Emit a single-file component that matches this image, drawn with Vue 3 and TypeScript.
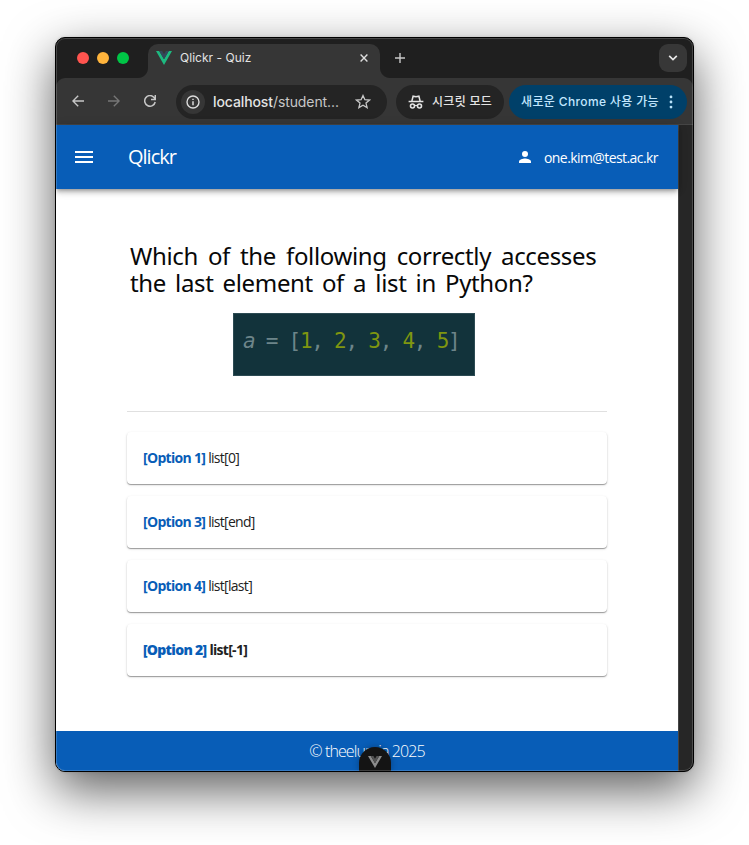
<script setup lang="ts">
interface QuizOption {
  id: number
  text: string
  selected: boolean
}

const options: QuizOption[] = [
  { id: 1, text: 'list[0]', selected: false },
  { id: 3, text: 'list[end]', selected: false },
  { id: 4, text: 'list[last]', selected: false },
  { id: 2, text: 'list[-1]', selected: true },
]

const values: number[] = [1, 2, 3, 4, 5]
</script>

<template>
  <main class="desktop">
    <section class="window">
      <header class="tabstrip">
        <div class="lights">
          <i class="light red"></i>
          <i class="light yellow"></i>
          <i class="light green"></i>
        </div>
        <div class="tab">
          <svg class="favicon" width="16" height="14" viewBox="0 0 16 14">
            <path d="M0 0H3.2L8 8.3 12.8 0H16L8 13.9Z" fill="#1eb980" />
            <path d="M3.2 0H6.1L8 3.2 9.9 0H12.8L8 8.3Z" fill="#33475b" />
          </svg>
          <span class="tab-title">Qlickr - Quiz</span>
          <svg class="close" width="8" height="8" viewBox="0 0 8 8">
            <path d="M.6.6 7.4 7.4M7.4.6.6 7.4" stroke="#dedede" stroke-width="1.4" />
          </svg>
        </div>
        <svg class="plus" width="10" height="10" viewBox="0 0 10 10">
          <path d="M5 0V10M0 5H10" stroke="#c9c9c9" stroke-width="1.4" />
        </svg>
        <div class="tab-search">
          <svg width="10" height="6" viewBox="0 0 10 6">
            <path d="M1.2.8 5 4.6 8.8.8" fill="none" stroke="#e6e6e6" stroke-width="1.7" />
          </svg>
        </div>
      </header>

      <nav class="toolbar">
        <svg class="nav-icon" width="12" height="12" viewBox="0 0 12 12">
          <path d="M12 6H1M6.2.7.9 6l5.3 5.3" fill="none" stroke="#c7c7c7" stroke-width="1.4" />
        </svg>
        <svg class="nav-icon" width="12" height="12" viewBox="0 0 12 12">
          <path d="M0 6H11M5.8.7 11.1 6l-5.3 5.3" fill="none" stroke="#777" stroke-width="1.4" />
        </svg>
        <svg class="nav-icon" width="12" height="12" viewBox="0 0 12 12">
          <path d="M11.2 7A5.3 5.3 0 1 1 10 2.4L11 3.6M11.3 0V4.4H7" fill="none" stroke="#c7c7c7" stroke-width="1.5" />
        </svg>
        <div class="address">
          <div class="info">
            <svg width="14" height="14" viewBox="0 0 14 14">
              <circle cx="7" cy="7" r="6" fill="none" stroke="#dcdcdc" stroke-width="1.4" />
              <path d="M7 6.2V10.2M7 3.7V5.1" stroke="#dcdcdc" stroke-width="1.5" />
            </svg>
          </div>
          <span class="url"><b>localhost</b>/student...</span>
          <svg class="star" width="16" height="15" viewBox="0 0 16 15">
            <path d="M8 1.5 9.9 5.7 14.5 6.1 11 9.1 12.1 13.6 8 11.2 3.9 13.6 5 9.1 1.5 6.1 6.1 5.7Z" fill="none" stroke="#c7c7c7" stroke-width="1.3" />
          </svg>
        </div>
        <div class="incognito">
          <svg width="16" height="14" viewBox="0 0 16 14" fill="none" stroke="#e3e3e3">
            <path d="M3.9 6 5.1 1.2 8 1.7 10.9 1.2 12.1 6M.6 6.6H15.4" stroke-width="1.5" />
            <circle cx="4.5" cy="11" r="2" stroke-width="1.6" />
            <circle cx="11.5" cy="11" r="2" stroke-width="1.6" />
            <path d="M6.6 10.8Q8 10 9.4 10.8" stroke-width="1.3" />
          </svg>
          <span>시크릿 모드</span>
        </div>
        <div class="update">
          <span>새로운 Chrome 사용 가능</span>
          <svg width="4" height="14" viewBox="0 0 4 14" fill="#b9e3fa">
            <circle cx="2" cy="1.9" r="1.4" />
            <circle cx="2" cy="7" r="1.4" />
            <circle cx="2" cy="12.1" r="1.4" />
          </svg>
        </div>
      </nav>

      <div class="viewport">
        <div class="page">
          <header class="appbar">
            <svg class="menu" width="18" height="12" viewBox="0 0 18 12">
              <path d="M0 0H18V2H0ZM0 5H18V7H0ZM0 10H18V12H0Z" fill="#fff" />
            </svg>
            <h1 class="brand">Qlickr</h1>
            <svg class="person" width="12" height="12" viewBox="0 0 12 12" fill="#fff">
              <circle cx="6" cy="3" r="3" />
              <path d="M0 12V10.5C0 8.5 4 7.5 6 7.5S12 8.5 12 10.5V12Z" />
            </svg>
            <span class="email">one.kim@test.ac.kr</span>
          </header>

          <section class="quiz">
            <div class="question">
              <p class="line first">Which of the following correctly accesses</p>
              <p class="line second">the last element of a list in Python?</p>
            </div>
            <div class="code"><em>a</em> = [<template v-for="(v, i) in values" :key="v"><span class="num">{{ v }}</span>{{ i < values.length - 1 ? ', ' : ']' }}</template></div>
            <hr class="divider" />
            <ul class="options">
              <li v-for="option in options" :key="option.id" class="option" :class="{ selected: option.selected }">
                <b class="label">[Option {{ option.id }}]</b>
                <span class="answer">{{ option.text }}</span>
              </li>
            </ul>
          </section>

          <footer class="footer">
            <span>© theelumia 2025</span>
            <div class="devtools">
              <svg width="14" height="12" viewBox="0 0 14 12">
                <path d="M0 0H2.8L7 7.2 11.2 0H14L7 12Z" fill="#8c8c8c" />
                <path d="M2.8 0H5.4L7 2.8 8.6 0H11.2L7 7.2Z" fill="#545454" />
              </svg>
            </div>
          </footer>
        </div>
        <aside class="gutter"></aside>
      </div>
    </section>
  </main>
</template>

<style>
body {
  background: #fff;
  overflow: hidden;
}
</style>

<style scoped>
* {
  box-sizing: border-box;
}

.desktop {
  width: 749px;
  height: 845px;
  padding: 37px 55px 0;
  overflow: hidden;
  background: #fff;
}

.window {
  position: relative;
  width: 639px;
  height: 735px;
  border: 1px solid #000;
  border-radius: 10px;
  overflow: hidden;
  background: #1f1f1f;
  box-shadow: 0 18px 50px rgba(0, 0, 0, 0.64), 0 0 3px rgba(0, 0, 0, 0.15);
  font-family: Inter, "Noto Sans CJK KR", sans-serif;
}

.window::after {
  content: "";
  position: absolute;
  inset: 0;
  border-radius: 9px;
  box-shadow: inset 0 0 0 1px rgba(255, 255, 255, 0.18);
  pointer-events: none;
}

.tabstrip {
  display: flex;
  height: 40px;
  background: #1f1f1f;
}

.lights {
  display: flex;
  gap: 8px;
  width: 92px;
  padding: 14px 0 0 21px;
}

.light {
  width: 12px;
  height: 12px;
  border-radius: 50%;
}

.red { background: #ff544f; }
.yellow { background: #ffb43c; }
.green { background: #00c546; }

.tab {
  position: relative;
  display: flex;
  align-items: center;
  width: 232px;
  height: 34px;
  margin-top: 6px;
  padding: 0 12px 6px 8px;
  border-radius: 10px 10px 0 0;
  background: #363636;
}

.tab::before,
.tab::after {
  content: "";
  position: absolute;
  bottom: 0;
  width: 10px;
  height: 10px;
}

.tab::before {
  left: -10px;
  background: radial-gradient(circle at 0 0, #1f1f1f 9.5px, #363636 10.5px);
}

.tab::after {
  right: -10px;
  background: radial-gradient(circle at 100% 0, #1f1f1f 9.5px, #363636 10.5px);
}

.tab-title {
  flex: 1;
  margin-left: 8px;
  padding-bottom: 2px;
  font-size: 12px;
  letter-spacing: 0.03px;
  color: #e3e3e3;
}

.plus {
  margin: 15px 0 0 15px;
}

.tab-search {
  display: flex;
  align-items: center;
  justify-content: center;
  width: 28px;
  height: 28px;
  margin: 6px 6px 0 auto;
  border-radius: 9px;
  background: #373737;
}

.toolbar {
  display: flex;
  align-items: center;
  height: 47px;
  padding: 0 6px 0 16px;
  border-bottom: 1px solid #454545;
  border-radius: 9px 9px 0 0;
  background: #363636;
}

.nav-icon {
  flex: none;
  margin-right: 24px;
}

.address {
  display: flex;
  align-items: center;
  width: 211px;
  height: 34px;
  margin-left: -4px;
  margin-top: 1px;
  padding-left: 5px;
  border-radius: 17px;
  background: #242424;
}

.info {
  display: flex;
  align-items: center;
  justify-content: center;
  width: 24px;
  height: 24px;
  border-radius: 50%;
  background: #363636;
}

.url {
  width: 126px;
  margin: 0 16px 0 8px;
  padding-bottom: 1px;
  font-size: 14px;
  letter-spacing: -0.1px;
  white-space: nowrap;
  color: #c7c7c7;
}

.url b {
  font-weight: 500;
  color: #e3e3e3;
}

.incognito,
.update {
  display: flex;
  align-items: center;
  height: 34px;
  margin-top: 1px;
  border-radius: 17px;
  font-size: 12px;
  font-weight: 500;
  white-space: nowrap;
}

.incognito {
  width: 108px;
  margin-left: 9px;
  padding-left: 12px;
  gap: 8px;
  letter-spacing: 0.3px;
  color: #e3e3e3;
  background: #242424;
}

.update {
  width: 178px;
  margin-left: 5px;
  padding: 0 14px 0 12px;
  justify-content: space-between;
  letter-spacing: 0.36px;
  color: #c2e7ff;
  background: #004069;
}

.incognito span,
.update span {
  padding-bottom: 2px;
}

.viewport {
  display: flex;
  height: 646px;
}

.page {
  display: flex;
  flex-direction: column;
  width: 622px;
  background: #fff;
  font-family: "Open Sans", "Noto Sans", sans-serif;
}

.gutter {
  flex: 1;
  border-left: 1px solid #454545;
  background: #262626;
}

.appbar {
  position: relative;
  display: flex;
  align-items: center;
  flex: none;
  height: 64px;
  padding: 0 19px;
  color: #fff;
  background: #085db7;
  box-shadow: 0 2px 4px -1px rgba(0, 0, 0, 0.3), 0 4px 5px rgba(0, 0, 0, 0.14), 0 1px 10px rgba(0, 0, 0, 0.12);
}

.brand {
  flex: 1;
  margin: 0 0 0 35px;
  padding-bottom: 2px;
  font-size: 20px;
  font-weight: 400;
  letter-spacing: -1px;
}

.person {
  margin-right: 13px;
}

.email {
  width: 115px;
  font-size: 14px;
  letter-spacing: -0.58px;
  white-space: nowrap;
}

.quiz {
  flex: 1;
  width: 480px;
  margin-left: 71px;
}

.question {
  padding: 53px 0 0 3px;
}

.line {
  margin: 0;
  font-family: "Noto Sans", sans-serif;
  font-size: 24px;
  line-height: 27px;
  letter-spacing: -0.35px;
  white-space: nowrap;
  color: #080808;
}

.first {
  word-spacing: 4.1px;
}

.second {
  word-spacing: 3.2px;
}

.code {
  width: 242px;
  height: 63px;
  margin: 17px 0 0 106px;
  padding-left: 9px;
  border: 1px solid #2c4b53;
  font-family: "DejaVu Sans Mono", monospace;
  font-size: 21px;
  letter-spacing: -1.26px;
  line-height: 55px;
  white-space: pre;
  color: #6d858a;
  background: #12333b;
}

.num {
  color: #7f9610;
}

.divider {
  height: 1px;
  margin: 35px 0 20px;
  border: 0;
  background: #e0e0e0;
}

.options {
  display: flex;
  flex-direction: column;
  gap: 12px;
  margin: 0;
  padding: 0;
  list-style: none;
}

.option {
  display: flex;
  align-items: center;
  gap: 3px;
  height: 52px;
  padding: 0 16px 2px;
  border-radius: 4px;
  font-size: 14px;
  letter-spacing: -0.7px;
  color: #212121;
  background: #fff;
  box-shadow: 0 1px 1px rgba(0, 0, 0, 0.34), 0 1px 3px rgba(0, 0, 0, 0.12);
}

.label {
  font-weight: 700;
  color: #085db7;
}

.selected {
  font-weight: 700;
}

.selected .label {
  font-weight: 800;
}

.footer {
  position: relative;
  flex: none;
  height: 40px;
  line-height: 40px;
  text-align: center;
  font-size: 16px;
  font-weight: 300;
  letter-spacing: -0.9px;
  color: #fff;
  background: #085db7;
}

.devtools {
  position: absolute;
  left: 303px;
  bottom: 0;
  display: flex;
  justify-content: center;
  width: 32px;
  height: 24px;
  padding-top: 9px;
  border-radius: 16px 16px 0 0;
  background: #141414;
  box-shadow: 0 0 6px rgba(0, 0, 0, 0.3);
}
</style>
